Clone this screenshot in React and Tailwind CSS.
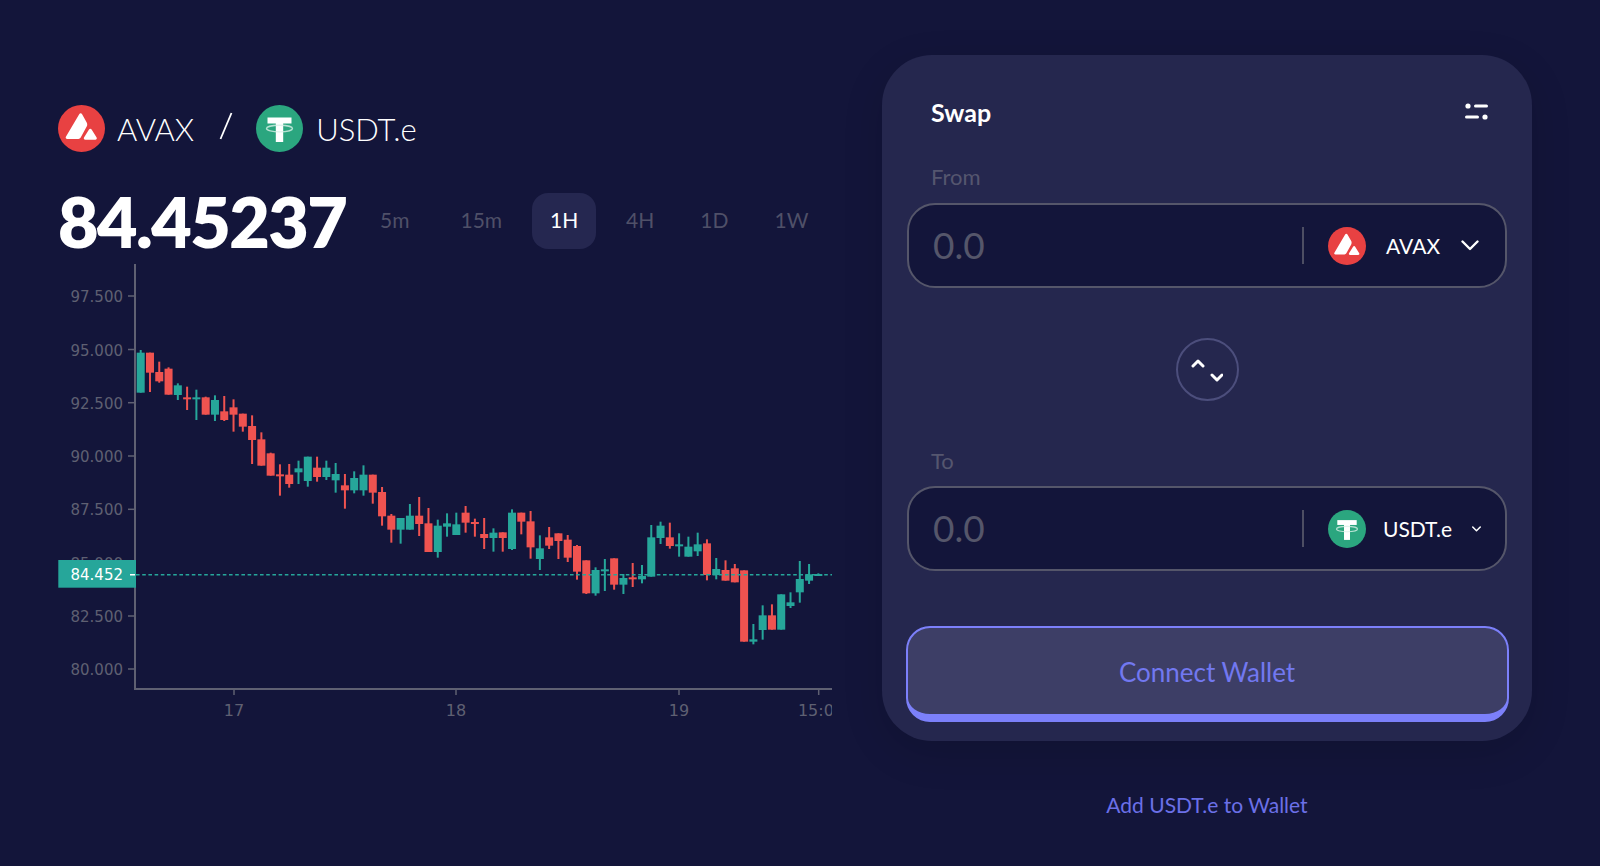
import React from "react";

const G = "g";
const R = "r";
const A = [260, [
  [G,270,278,398,398],[R,278,278,338,396],[R,305,336,364,368],[R,322,326,404,404],[G,370,376,405,420],
  [R,380,412,416,450],[G,389,412,416,480],[R,410,412,464,464],[G,406,420,464,483],[R,408,454,480,483],
  [R,418,442,464,515],[R,461,461,500,515],[R,466,498,540,612],[R,517,538,617,617],
]];
const B = [440, [
  [R,38,40,107,107],[R,73,103,109,167],[R,72,104,132,143],[G,62,85,97,132],[G,50,50,123,140],[R,50,83,111,125],
  [G,62,83,111,120],[G,69,102,121,158],[R,102,136,151,206],[G,94,114,151,160],[G,76,104,151,167],
  [R,104,104,158,191],[R,141,156,229,257],[R,222,227,269,308],[G,234,234,269,311],[G,192,227,269,269],
  [R,171,227,252,288],[R,204,250,336,336],[G,239,257,336,353],[G,220,250,260,290],
]];
const C = [490, [
  [G,68,103,135,135],[R,48,68,98,128],[R,86,96,101,140],[R,84,132,144,177],[G,115,128,144,185],[R,127,127,144,185],
  [G,58,68,177,180],[R,68,68,95,133],[R,63,94,172,206],[G,136,175,207,240],[R,111,142,167,177],[R,130,130,153,207],
  [R,135,149,203,216],[R,165,168,245,269],[R,211,211,310,312],[G,232,240,310,317],[G,207,238,243,303],
  [R,205,205,284,299],[G,252,264,284,312],[R,219,262,267,291],
]];
const D = [510, [
  [G,165,198,208,220],[G,45,82,200,200],[G,35,47,84,102],[R,38,82,108,116],[G,70,103,108,140],[G,80,110,140,140],
  [G,68,103,124,138],[R,88,100,195,211],[G,144,177,195,208],[R,151,180,212,212],[R,162,175,217,217],
  [R,181,181,395,395],[G,342,388,395,403],[G,286,316,360,389],[R,283,316,359,359],[G,253,253,359,359],
  [G,247,277,288,294],[G,153,207,247,278],[G,162,193,212,222],[G,190,192,198,198],
]];
const candles = [A, B, C, D].flatMap(([off, list]) =>
  list.map(([t, a, b, c, d]) => ({ t, wt: off + a / 3, bt: off + b / 3, bb: off + c / 3, wb: off + d / 3 }))
);
const yTicks = [
  ["97.500", 296], ["95.000", 349.5], ["92.500", 402.7], ["90.000", 456],
  ["87.500", 509.3], ["85.000", 562.7], ["82.500", 616], ["80.000", 669],
];
const xTicks = [["17", 234], ["18", 456], ["19", 679], ["15:00", 821]];
const GREEN = "#26a69a";
const RED = "#ef5350";
const AXIS = "#5f6072";

function Chart() {
  return (
    <svg width="774" height="470" viewBox="58 264 774 470" className="block" style={{ fontFamily: "'DejaVu Sans', sans-serif" }}>
      <rect x="134" y="264" width="2" height="426" fill={AXIS} />
      <rect x="134" y="688" width="698" height="2" fill={AXIS} />
      {yTicks.map(([label, y]) => (
        <g key={label}>
          <rect x="128" y={y - 0.75} width="6" height="1.5" fill={AXIS} />
          <text x="123" y={y + 6} textAnchor="end" fontSize="15" fill={AXIS}>{label}</text>
        </g>
      ))}
      {xTicks.map(([label, x]) => (
        <g key={label}>
          <rect x={(label === "15:00" ? 818.7 : x) - 0.75} y="690" width="1.5" height="5" fill={AXIS} />
          <text x={x} y="716" textAnchor="middle" fontSize="16" fill={AXIS}>{label}</text>
        </g>
      ))}
      {candles.map((c, i) => {
        const cx = 140.7 + 9.283 * i;
        const col = c.t === G ? GREEN : RED;
        return (
          <g key={i} fill={col}>
            <rect x={cx - 1} y={c.wt} width="2" height={Math.max(c.wb - c.wt, 0)} />
            <rect x={cx - 4} y={c.bt} width="8" height={Math.max(c.bb - c.bt, 2)} />
          </g>
        );
      })}
      <line x1="136" x2="832" y1="574.7" y2="574.7" stroke={GREEN} strokeWidth="1.4" strokeDasharray="3.6 2.6" />
      <rect x="58.3" y="560" width="77.7" height="27.7" fill={GREEN} />
      <text x="123" y="580" textAnchor="end" fontSize="15" fill="#ffffff">84.452</text>
      <rect x="130" y="574" width="5" height="1.5" fill="#ffffff" />
    </svg>
  );
}

function AvaxIcon({ size }) {
  return (
    <svg width={size} height={size} viewBox="0 0 47 47" className="block shrink-0">
      <circle cx="23.5" cy="23.5" r="23.5" fill="#e84142" />
      <path d="M21.2 9.2c.7-1.2 2.2-1.2 2.9 0l4.6 8.2c.7 1.3.7 2.9 0 4.2l-6 11c-.5.9-1.3 1.4-2.3 1.4H9.2c-1.2 0-1.9-1.2-1.3-2.2z" fill="#ffffff" />
      <path d="M31 24.4c.6-1 2-1 2.6 0l5 8.2c.6 1 -.1 2.1-1.3 2.1h-10c-1.2 0-1.9-1.2-1.3-2.2z" fill="#ffffff" />
    </svg>
  );
}

function TetherIcon({ size }) {
  return (
    <svg width={size} height={size} viewBox="0 0 47 47" className="block shrink-0">
      <circle cx="23.5" cy="23.5" r="23.5" fill="#2ba67f" />
      <rect x="11.5" y="12.5" width="24" height="6" fill="#ffffff" />
      <rect x="19.8" y="14" width="7.4" height="23" fill="#ffffff" />
      <ellipse cx="23.5" cy="23.6" rx="13" ry="3.3" fill="none" stroke="#d8f0e7" strokeWidth="1.4" opacity="0.8" />
    </svg>
  );
}

function Chevron({ w, h, sw }) {
  return (
    <svg width={w} height={h} viewBox="0 0 18 11" className="block shrink-0">
      <path d="M1.5 1.5 9 9l7.5-7.5" fill="none" stroke="#ffffff" strokeWidth={sw} strokeLinecap="round" strokeLinejoin="round" />
    </svg>
  );
}

function TokenBox({ amount = "0.0", children }) {
  return (
    <div className="flex h-[85px] items-center rounded-[28px] border-2 border-[#55566a] bg-[#13153a] pl-[24px]">
      <div className="w-[369px] pb-[3px] text-[37px] leading-none text-[#55566a]">{amount}</div>
      <div className="h-[37px] w-[2px] bg-[#4d4e63]" />
      {children}
    </div>
  );
}

const tabs = [
  ["5m", "", "text-[#4f5068]"],
  ["15m", "", "text-[#4f5068]"],
  ["1H", "", "text-white"],
  ["4H", "", "text-[#4f5068]"],
  ["1D", "ml-[-5px]", "text-[#4f5068]"],
  ["1W", "ml-[-5px]", "text-[#4f5068]"],
];

export default function App() {
  return (
    <div className="flex h-[866px] w-[1600px] overflow-hidden bg-[#13153a] pl-[58px] text-white" style={{ fontFamily: "Lato, sans-serif" }}>
      <div className="w-[824px] pt-[105px]">
        <div className="flex h-[47px] items-center">
          <AvaxIcon size={47} />
          <span className="ml-[12px] mt-[2px] text-[31px] font-light leading-none">AVAX</span>
          <svg width="14" height="28" viewBox="0 0 14 28" className="ml-[25px] mb-[6px] block shrink-0">
            <path d="M12.5 1 1.5 27" stroke="#ffffff" strokeWidth="1.8" fill="none" />
          </svg>
          <div className="ml-[23px]"><TetherIcon size={47} /></div>
          <span className="ml-[13px] mt-[2px] text-[31px] font-light leading-none">USDT.e</span>
        </div>
        <div className="mt-[41px] flex h-[56px] items-center">
          <div className="w-[287px] text-[70px] font-extrabold leading-none tracking-[-1.6px]">84.45237</div>
          <div className="ml-[14px] flex items-center gap-[9px]">
            {tabs.map(([t, m, c]) => (
              <div
                key={t}
                className={
                  t === "1H"
                    ? "flex h-[56px] w-[64px] items-center justify-center rounded-[16px] bg-[#252750] pb-[2px] text-[21px] text-white"
                    : `flex h-[56px] items-center justify-center px-[21px] pb-[3px] text-[21px] ${m} ${c}`
                }
              >
                {t}
              </div>
            ))}
          </div>
        </div>
        <div className="mt-[15px]">
          <Chart />
        </div>
      </div>
      <div className="w-[650px] pt-[55px]">
        <div className="flex h-[686px] flex-col rounded-[50px] bg-[#25274e] px-[25px] pt-[40px] shadow-[0_12px_40px_rgba(0,0,0,0.14)]">
          <div className="flex h-[36px] items-center justify-between pl-[24px] pr-[19px]">
            <span className="mb-[2px] text-[25px] font-bold leading-none">Swap</span>
            <svg width="23" height="17" viewBox="0 0 23 17" className="mb-[3px] block">
              <circle cx="3" cy="3" r="2.6" fill="#fff" />
              <rect x="9" y="1.5" width="14" height="3" rx="1.5" fill="#fff" />
              <rect x="0" y="12.5" width="14" height="3" rx="1.5" fill="#fff" />
              <circle cx="20" cy="14" r="2.6" fill="#fff" />
            </svg>
          </div>
          <div className="mt-[33px] pl-[24px] text-[22px] leading-[26px] text-[#55566f]">From</div>
          <div className="mt-[13px]">
            <TokenBox>
              <div className="ml-[24px]"><AvaxIcon size={38} /></div>
              <span className="ml-[20px] text-[21px] leading-none">AVAX</span>
              <div className="ml-[21px]"><Chevron w={18} h={11} sw={2.4} /></div>
            </TokenBox>
          </div>
          <div className="mt-[50px] flex justify-center">
            <div className="flex h-[63px] w-[63px] items-center justify-center rounded-full border-2 border-[#4c4e7c]">
              <svg width="32" height="24" viewBox="0 0 32 24" className="block">
                <path d="M2 8 7 3l5 5" fill="none" stroke="#fff" strokeWidth="3" strokeLinecap="round" strokeLinejoin="round" />
                <path d="M21 17l5 5 5-5" fill="none" stroke="#fff" strokeWidth="3" strokeLinecap="round" strokeLinejoin="round" />
              </svg>
            </div>
          </div>
          <div className="mt-[47px] pl-[24px] text-[22px] leading-[26px] text-[#55566f]">To</div>
          <div className="mt-[12px]">
            <TokenBox>
              <div className="ml-[24px]"><TetherIcon size={38} /></div>
              <span className="ml-[17px] text-[21px] leading-none">USDT.e</span>
              <div className="ml-[20px]"><Chevron w={9} h={6} sw={3} /></div>
            </TokenBox>
          </div>
          <button className="mx-[-1.5px] mt-[55px] flex h-[96px] items-center justify-center rounded-[24px] border-2 border-b-[8px] border-[#7c80fa] bg-[#3d3e66] pt-[2px] text-[26px] leading-none text-[#7278f0]">
            Connect Wallet
          </button>
        </div>
        <div className="mt-[50px] text-center text-[21px] leading-[28px] text-[#6b70e8]">Add USDT.e to Wallet</div>
      </div>
    </div>
  );
}
